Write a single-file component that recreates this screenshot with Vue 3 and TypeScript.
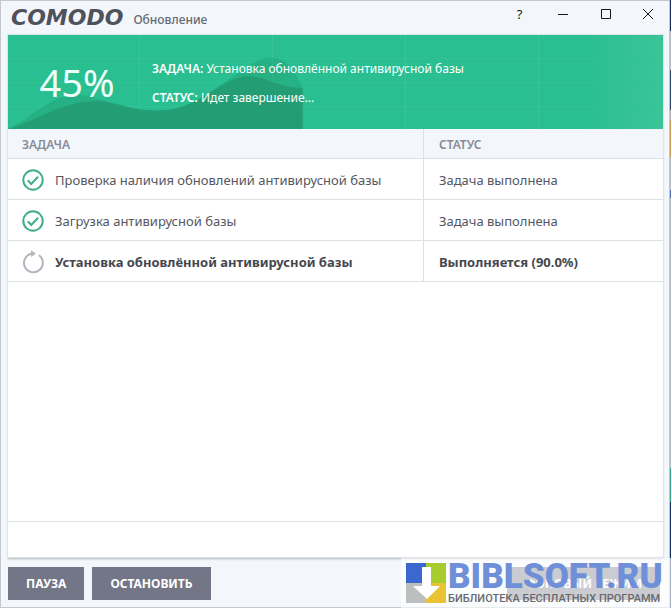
<script setup lang="ts">
interface Task {
  name: string
  status: string
  done: boolean
}

const progress = 45
const tasks: Task[] = [
  { name: 'Проверка наличия обновлений антивирусной базы', status: 'Задача выполнена', done: true },
  { name: 'Загрузка антивирусной базы', status: 'Задача выполнена', done: true },
  { name: 'Установка обновлённой антивирусной базы', status: 'Выполняется (90.0%)', done: false },
]
</script>

<template>
  <div class="desktop">
    <main class="window">
      <header class="titlebar">
        <span class="brand">COMODO</span>
        <h1 class="title">Обновление</h1>
        <div class="controls">
          <button type="button" class="control" aria-label="Справка">?</button>
          <button type="button" class="control" aria-label="Свернуть">
            <svg width="12" height="12" viewBox="0 0 12 12"><path d="M1 6.500h10" /></svg>
          </button>
          <button type="button" class="control" aria-label="Развернуть">
            <svg width="12" height="12" viewBox="0 0 12 12"><path d="M1.500 1.500h9v9h-9z" /></svg>
          </button>
          <button type="button" class="control" aria-label="Закрыть">
            <svg width="12" height="12" viewBox="0 0 12 12"><path d="M1 1l10 10M11 1L1 11" /></svg>
          </button>
        </div>
      </header>

      <section class="panel">
        <div class="banner">
          <div class="wave" :style="{ width: progress + '%' }">
            <svg viewBox="0 0 295 94" preserveAspectRatio="none">
              <path class="back" d="M0 94C24 82 36 67 58 61C84 54 112 77 146 77C184 77 204 54 228 40C248 26 262 16 277 27C286 34 290 45 295 52V94Z" />
              <path class="front" d="M0 94C28 86 52 67 86 66C112 66 124 78 158 75C194 71 212 44 239 41C258 41 270 53 295 53V94Z" />
            </svg>
          </div>
          <div class="percent">{{ progress }}%</div>
          <div class="summary">
            <p><b>ЗАДАЧА:</b> Установка обновлённой антивирусной базы</p>
            <p><b>СТАТУС:</b> Идет завершение...</p>
          </div>
        </div>

        <table class="tasks">
          <thead>
            <tr>
              <th class="name-col" scope="col">ЗАДАЧА</th>
              <th scope="col">СТАТУС</th>
            </tr>
          </thead>
          <tbody>
            <tr v-for="task in tasks" :key="task.name" :class="{ active: !task.done }">
              <td>
                <div class="task">
                  <svg v-if="task.done" class="icon done" width="22" height="22" viewBox="0 0 22 22">
                    <circle cx="11" cy="11" r="9.700" />
                    <path d="M5.800 11.300l3.400 3.700 6.900-7.200" />
                  </svg>
                  <svg v-else class="icon pending" width="22" height="22" viewBox="0 0 22 22">
                    <path d="M17 4.300A9.400 9.400 0 1 1 10.500 2.500" />
                    <path class="arrow" d="M9 -0.800l4.800 3.400L9.200 6z" />
                  </svg>
                  <span>{{ task.name }}</span>
                </div>
              </td>
              <td>{{ task.status }}</td>
            </tr>
          </tbody>
        </table>
        <div class="space"></div>
        <div class="panel-foot"></div>
      </section>

      <footer class="actions">
        <button type="button" class="action">ПАУЗА</button>
        <button type="button" class="action">ОСТАНОВИТЬ</button>
        <button type="button" class="action background-mode">ФОНОВЫЙ РЕЖИМ</button>
      </footer>
    </main>

    <aside class="watermark">
      <svg width="40" height="40" viewBox="0 0 40 40">
        <path fill="#3b68ce" d="M0 0h20v20H0z" />
        <path fill="#a7cc2d" d="M20 0h20v20H20z" />
        <path fill="#bdbebe" d="M0 20h20v20H0z" />
        <path fill="#e8c333" d="M20 20h20v20H20z" />
        <path fill="#fff" d="M16 4h9v19h9L21 36 7 23h9z" />
      </svg>
      <div class="site">
        <span class="site-name">BIBLSOFT.RU</span>
        <span class="site-tag">БИБЛИОТЕКА БЕСПЛАТНЫХ ПРОГРАММ</span>
      </div>
    </aside>
  </div>
</template>

<style>
body {
  margin: 0;
}
</style>

<style scoped>
.desktop {
  position: relative;
  box-sizing: border-box;
  min-height: 100vh;
  padding-right: 1px;
  display: flex;
  overflow: hidden;
  background: linear-gradient(#16305c 0 31px, #b9bcc4 31px 70px, #2d4568 70px 110px, #b9b4ae 110px 121px, #c99a55 121px 157px, #b9bcc4 157px 190px, #5573b8 190px 198px, #b9bcc4 198px 468px, #38a184 468px 502px, #16305c 502px);
  color: #55575f;
  font-family: "Noto Sans", "Open Sans", sans-serif;
  font-size: 13px;
}

.window {
  box-sizing: border-box;
  flex: 1;
  min-width: 0;
  display: flex;
  flex-direction: column;
  padding: 0 6px 7px 7px;
  border: 1px solid #c3c6cd;
  background: #f3f7fb;
}

.titlebar {
  display: flex;
  align-items: center;
  height: 34px;
  padding-left: 3px;
}

.brand {
  color: #4f515b;
  font: italic bold 22px/34px "DejaVu Sans", sans-serif;
}

.title {
  margin: 4px 0 0 10px;
  color: #666976;
  font-size: 12px;
  font-weight: 500;
  line-height: 16px;
}

.controls {
  align-self: flex-start;
  display: flex;
  margin-left: auto;
}

.control {
  display: grid;
  place-items: center;
  width: 43px;
  height: 26px;
  padding: 0;
  border: 0;
  background: none;
  color: #15171c;
  font: 13px/16px "Noto Sans", sans-serif;
}

.control:last-child {
  width: 42px;
  margin-right: -6px;
}

.control svg {
  fill: none;
  stroke: #15171c;
}

.panel {
  flex: 1;
  display: flex;
  flex-direction: column;
  background: #fff;
  box-shadow: 0 0 0 1px #dfe4ea, 0 2px 2px #aeb3ba;
}

.banner {
  position: relative;
  display: flex;
  align-items: center;
  height: 94px;
  background:
    repeating-linear-gradient(90deg, transparent 0 131px, #3ac599 131px 132px, transparent 132px 133px),
    repeating-linear-gradient(transparent 0 23px, #33c295 23px 24px),
    linear-gradient(90deg, #29bf90 88%, #3bc498);
  color: #fff;
}

.wave {
  position: absolute;
  inset: 0 auto 0 0;
}

.wave svg {
  display: block;
  width: 100%;
  height: 100%;
}

.back {
  fill: #25a97e;
  opacity: 0.6;
}

.front {
  fill: #239b71;
  opacity: 0.85;
}

.percent {
  position: relative;
  width: 138px;
  text-align: center;
  color: #effff9;
  font-size: 38px;
  line-height: 48px;
}

.summary {
  position: relative;
  display: grid;
  gap: 13px;
  padding: 3px 0 0 6px;
  font-size: 12px;
  line-height: 16px;
}

.summary p {
  margin: 0;
}

.summary b {
  font-weight: 600;
}

.tasks {
  width: 100%;
  table-layout: fixed;
  border-collapse: separate;
  border-spacing: 0;
}

.tasks th,
.tasks td {
  box-sizing: border-box;
  padding: 2px 15px 0;
  border-bottom: 1px solid #dcdfe3;
  text-align: left;
}

.tasks th {
  height: 30px;
  background: #f3f7fb;
  color: #878b97;
  font-size: 12px;
  font-weight: 600;
  line-height: 16px;
}

.tasks td {
  height: 41px;
  line-height: 18px;
}

.tasks th:first-child,
.tasks td:first-child {
  padding-left: 14px;
  border-right: 1px solid #dcdfe3;
}

.name-col {
  width: 63.5%;
}

.task {
  display: flex;
  align-items: center;
  gap: 11px;
}

.active {
  color: #45474f;
  font-weight: 700;
}

.icon {
  flex: none;
  overflow: visible;
  fill: none;
  stroke-width: 2;
}

.done {
  stroke: #3fae8b;
}

.pending {
  stroke: #b3b4bd;
}

.pending .arrow {
  fill: #b3b4bd;
  stroke: none;
}

.space {
  flex: 1;
}

.panel-foot {
  height: 35px;
  border-top: 1px solid #dcdfe3;
}

.actions {
  display: flex;
  gap: 8px;
  padding: 10px 3px 0 0;
}

.action {
  height: 33px;
  padding: 0 18px;
  border: 0;
  background: #727686;
  color: #fff;
  font: 700 12px/18px "Noto Sans", sans-serif;
}

.background-mode {
  margin-left: auto;
}

.watermark {
  position: absolute;
  right: 0;
  bottom: 0;
  box-sizing: border-box;
  display: flex;
  gap: 2px;
  width: 270px;
  height: 50px;
  padding: 5px 0 0 5px;
  background: #ffffffa0;
}

.watermark svg {
  flex: none;
}

.site {
  display: flex;
  flex-direction: column;
  white-space: nowrap;
}

.site-name {
  color: #6f90d8;
  font: 900 35px/28px Roboto, sans-serif;
}

.site-tag {
  color: #68696d;
  font: 500 11px/16px Roboto, sans-serif;
}
</style>
